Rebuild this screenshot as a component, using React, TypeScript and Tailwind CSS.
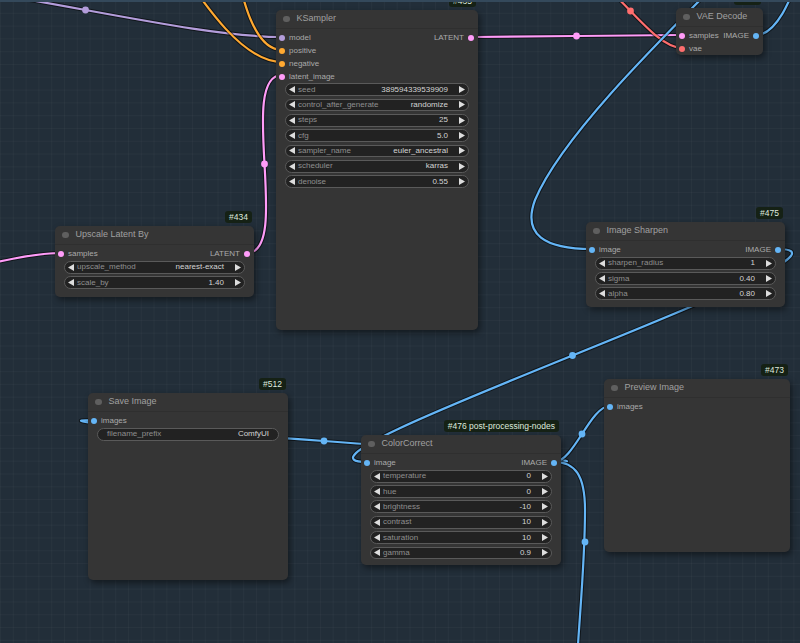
import React from 'react';

/* ----------------------------------
   Types & data
----------------------------------- */

type Slot = { name: string; color: string };
type Widget = { label: string; value: string; kind?: 'text' };

interface NodeSpec {
  id: string;
  badge: string;
  title: string;
  x: number;
  y: number;
  w: number;
  h: number;
  inputs?: Slot[];
  outputs?: Slot[];
  widgets?: Widget[];
}

const C = {
  model: '#b39ddb',
  cond: '#ffa931',
  latent: '#ff9cf9',
  vae: '#ff6e6e',
  image: '#64b5f6',
};

const NODES: NodeSpec[] = [
  {
    id: 'ksampler',
    badge: '#435',
    title: 'KSampler',
    x: 276, y: 10, w: 202, h: 320,
    inputs: [
      { name: 'model', color: C.model },
      { name: 'positive', color: C.cond },
      { name: 'negative', color: C.cond },
      { name: 'latent_image', color: C.latent },
    ],
    outputs: [{ name: 'LATENT', color: C.latent }],
    widgets: [
      { label: 'seed', value: '389594339539909' },
      { label: 'control_after_generate', value: 'randomize' },
      { label: 'steps', value: '25' },
      { label: 'cfg', value: '5.0' },
      { label: 'sampler_name', value: 'euler_ancestral' },
      { label: 'scheduler', value: 'karras' },
      { label: 'denoise', value: '0.55' },
    ],
  },
  {
    id: 'upscale',
    badge: '#434',
    title: 'Upscale Latent By',
    x: 55, y: 226, w: 199, h: 71,
    inputs: [{ name: 'samples', color: C.latent }],
    outputs: [{ name: 'LATENT', color: C.latent }],
    widgets: [
      { label: 'upscale_method', value: 'nearest-exact' },
      { label: 'scale_by', value: '1.40' },
    ],
  },
  {
    id: 'vae',
    badge: '#436',
    title: 'VAE Decode',
    x: 676, y: 8, w: 87, h: 47,
    inputs: [
      { name: 'samples', color: C.latent },
      { name: 'vae', color: C.vae },
    ],
    outputs: [{ name: 'IMAGE', color: C.image }],
  },
  {
    id: 'sharpen',
    badge: '#475',
    title: 'Image Sharpen',
    x: 586, y: 222, w: 199, h: 85,
    inputs: [{ name: 'image', color: C.image }],
    outputs: [{ name: 'IMAGE', color: C.image }],
    widgets: [
      { label: 'sharpen_radius', value: '1' },
      { label: 'sigma', value: '0.40' },
      { label: 'alpha', value: '0.80' },
    ],
  },
  {
    id: 'save',
    badge: '#512',
    title: 'Save Image',
    x: 88, y: 393, w: 200, h: 187,
    inputs: [{ name: 'images', color: C.image }],
    widgets: [{ label: 'filename_prefix', value: 'ComfyUI', kind: 'text' }],
  },
  {
    id: 'color',
    badge: '#476 post-processing-nodes',
    title: 'ColorCorrect',
    x: 361, y: 435, w: 200, h: 130,
    inputs: [{ name: 'image', color: C.image }],
    outputs: [{ name: 'IMAGE', color: C.image }],
    widgets: [
      { label: 'temperature', value: '0' },
      { label: 'hue', value: '0' },
      { label: 'brightness', value: '-10' },
      { label: 'contrast', value: '10' },
      { label: 'saturation', value: '10' },
      { label: 'gamma', value: '0.9' },
    ],
  },
  {
    id: 'preview',
    badge: '#473',
    title: 'Preview Image',
    x: 604, y: 379, w: 186, h: 173,
    inputs: [{ name: 'images', color: C.image }],
  },
];

/* ----------------------------------
   Links
----------------------------------- */

const spline = (x1: number, y1: number, x2: number, y2: number) => {
  const d = Math.hypot(x2 - x1, y2 - y1) * 0.25;
  return {
    path: `M${x1} ${y1} C${x1 + d} ${y1} ${x2 - d} ${y2} ${x2} ${y2}`,
    mid: [(x1 + x2) / 2, (y1 + y2) / 2] as [number, number],
  };
};

type Link = { path: string; color: string; mid?: [number, number] };

const mk = (x1: number, y1: number, x2: number, y2: number, color: string, dot = true): Link => {
  const s = spline(x1, y1, x2, y2);
  return { path: s.path, color, mid: dot ? s.mid : undefined };
};

const LINKS: Link[] = [
  mk(-111, -17, 282, 37, C.model),
  mk(180, -150, 282, 50, C.cond, false),
  mk(60, -150, 282, 62, C.cond, false),
  mk(-150, 290, 61, 253, C.latent, false),
  mk(247, 253, 282, 75, C.latent),
  mk(471, 37, 682, 35, C.latent),
  mk(579, -26, 682, 48, C.vae),
  mk(756, 35, 850, -100, C.image, false),
  {
    path: 'M720 -20 C650 50 560 140 535 200 C522 235 545 249 592 249',
    color: C.image,
  },
  mk(778, 249, 367, 462, C.image),
  mk(554, 462, 94, 420, C.image),
  mk(554, 462, 610, 406, C.image),
  {
    path: 'M554 462 C575 462 585 475 585 510 C585 560 580 610 577 660',
    color: C.image,
    mid: [585, 542],
  },
];

const LinkLayer: React.FC = () => (
  <svg className="absolute inset-0" width={800} height={643} viewBox="0 0 800 643">
    {LINKS.map((l, i) => (
      <g key={i}>
        <path d={l.path} fill="none" stroke="rgba(0,0,0,0.55)" strokeWidth={4.2} />
        <path d={l.path} fill="none" stroke={l.color} strokeWidth={2.2} />
      </g>
    ))}
    {LINKS.filter((l) => l.mid).map((l, i) => (
      <circle key={i} cx={l.mid![0]} cy={l.mid![1]} r={3.4} fill={l.color} />
    ))}
  </svg>
);

/* ----------------------------------
   Node parts
----------------------------------- */

const Arrow: React.FC<{ dir: 'left' | 'right' }> = ({ dir }) => (
  <svg width={6} height={7} viewBox="0 0 6 7" className="shrink-0">
    <polygon points={dir === 'left' ? '6,0 6,7 0,3.5' : '0,0 0,7 6,3.5'} fill="#dddddd" />
  </svg>
);

const WidgetRow: React.FC<{ w: Widget }> = ({ w }) => {
  if (w.kind === 'text') {
    return (
      <div className="flex h-[12.8px] items-center rounded-full border border-[#5a5a5a] bg-[#222222] px-[9px] text-[8px] leading-none">
        <span className="text-[#8f8f8f]">{w.label}</span>
        <span className="flex-1" />
        <span className="text-[#d4d4d4]">{w.value}</span>
      </div>
    );
  }
  return (
    <div className="flex h-[12.8px] items-center rounded-full border border-[#5a5a5a] bg-[#222222] px-[3px] text-[8px] leading-none">
      <Arrow dir="left" />
      <span className="ml-[3px] text-[#8f8f8f]">{w.label}</span>
      <span className="flex-1" />
      <span className="text-[#d4d4d4]">{w.value}</span>
      <span className="ml-[11px]">
        <Arrow dir="right" />
      </span>
    </div>
  );
};

const Dot: React.FC<{ color: string }> = ({ color }) => (
  <span className="block h-[6px] w-[6px] shrink-0 rounded-full" style={{ background: color }} />
);

const GraphNode: React.FC<{ n: NodeSpec }> = ({ n }) => {
  const inputs = n.inputs ?? [];
  const outputs = n.outputs ?? [];
  const rows = Math.max(inputs.length, outputs.length);

  return (
    <div
      className="absolute flex flex-col rounded-[5px] bg-[#353535] shadow-[2px_3px_6px_rgba(0,0,0,0.45)]"
      style={{ left: n.x, top: n.y, width: n.w, height: n.h }}
    >
      {/* badge */}
      <div className="absolute bottom-full right-[2px] mb-[3px] rounded-[3px] bg-[#152115] px-[4px] py-[1.5px] text-[8.5px] leading-[9px] text-[#dfe9df]">
        {n.badge}
      </div>

      {/* title */}
      <div className="flex h-[19px] shrink-0 items-center gap-[7px] border-b border-[#2f2f2f] pl-[7px] text-[9px] text-[#a0a0a0]">
        <span className="block h-[6.5px] w-[6.5px] rounded-full bg-[#5f5f5f]" />
        <span>{n.title}</span>
      </div>

      {/* slots */}
      <div className="flex flex-col pt-[3px]">
        {Array.from({ length: rows }).map((_, i) => (
          <div key={i} className="flex h-[12.8px] items-center justify-between text-[8px] leading-none text-[#aaaaaa]">
            <div className="flex items-center gap-[4px] pl-[3px]">
              {inputs[i] && (
                <>
                  <Dot color={inputs[i].color} />
                  <span>{inputs[i].name}</span>
                </>
              )}
            </div>
            <div className="flex items-center gap-[4px] pr-[4px]">
              {outputs[i] && (
                <>
                  <span>{outputs[i].name}</span>
                  <Dot color={outputs[i].color} />
                </>
              )}
            </div>
          </div>
        ))}
      </div>

      {/* widgets */}
      {n.widgets && (
        <div className="flex flex-col gap-[2.56px] px-[9px]">
          {n.widgets.map((w) => (
            <WidgetRow key={w.label} w={w} />
          ))}
        </div>
      )}
    </div>
  );
};

/* ----------------------------------
   App
----------------------------------- */

export default function App() {
  return (
    <div className="relative h-[643px] w-[800px] overflow-hidden bg-[#222e39] bg-[linear-gradient(rgba(255,255,255,0.028)_1px,transparent_1px),linear-gradient(90deg,rgba(255,255,255,0.028)_1px,transparent_1px)] bg-[size:12.8px_12.8px] font-['Liberation_Sans',Arial,sans-serif]">
      <LinkLayer />
      {NODES.map((n) => (
        <GraphNode key={n.id} n={n} />
      ))}
      {/* canvas top edge */}
      <div className="absolute inset-x-0 top-0 h-[2px] bg-[#34495b]" />
    </div>
  );
}
